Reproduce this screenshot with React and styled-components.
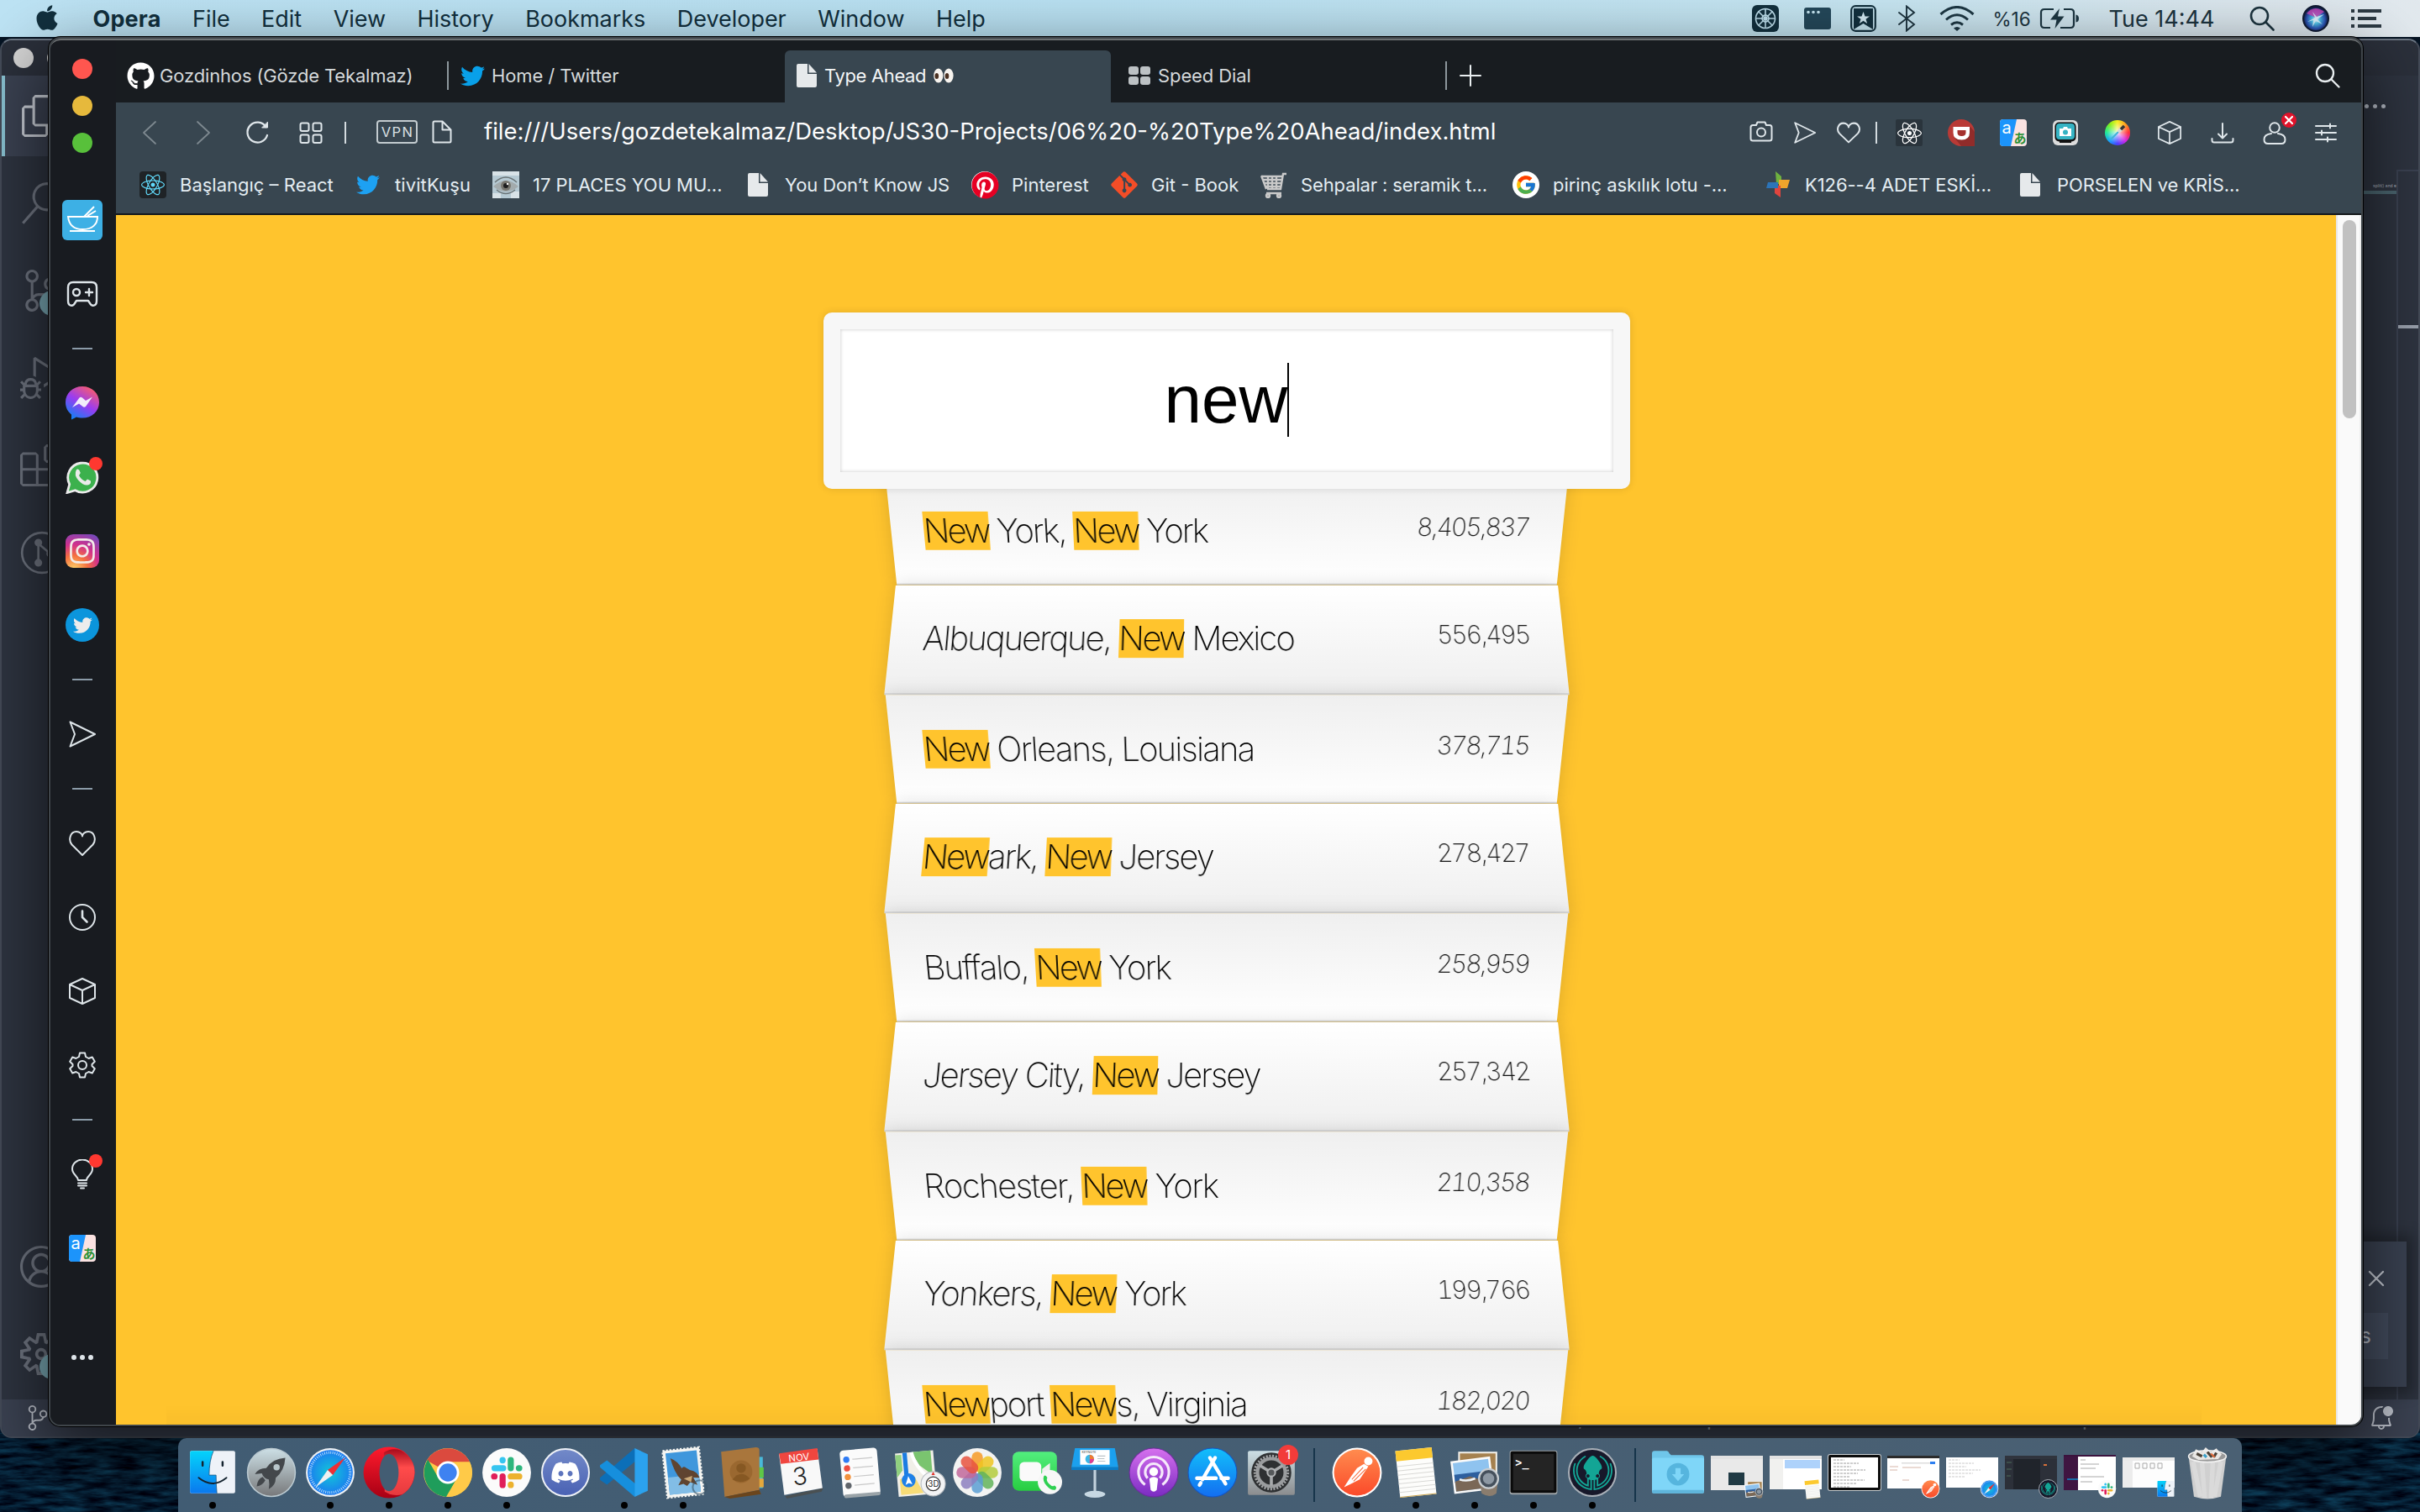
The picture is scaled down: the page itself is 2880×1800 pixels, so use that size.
import React from "react";
import styled, { createGlobalStyle, css } from "styled-components";
import { FaApple, FaGithub, FaTwitter, FaReact, FaPinterest, FaGitAlt, FaInstagram, FaDiscord } from "react-icons/fa";
import { FcGoogle } from "react-icons/fc";
import { SiGitkraken } from "react-icons/si";
import { VscFiles, VscSearch, VscSourceControl, VscDebugAlt, VscExtensions, VscAccount, VscSettingsGear, VscBellDot } from "react-icons/vsc";

const UI = `Inter, "Noto Sans", "Liberation Sans", sans-serif`;
const INK = "#12303e";
const YELLOW = "#ffc42d";

const GlobalStyle = createGlobalStyle`
  *, *::before, *::after { box-sizing: border-box; }
  body { margin: 0; background: #04101c; font-family: ${UI}; }
  svg { display: block; flex: none; }
`;

/* ---------- desktop ---------- */

const Desktop = styled.div`
  position: relative;
  width: 2880px;
  height: 1800px;
  overflow: hidden;
  background: #051322;
`;

const Wallpaper = styled.svg`
  position: absolute;
  left: 0;
  bottom: 0;
`;

const MenuBar = styled.header`
  position: relative;
  display: flex;
  align-items: center;
  justify-content: space-between;
  height: 44px;
  padding-left: 39px;
  padding-right: 46px;
  color: ${INK};
  font-size: 27px;
  background: linear-gradient(90deg, #bde3f4 0%, #b9e1f2 45%, #c6e5f1 78%, #dbe7ee 92%, #e2e9ee 100%);
`;

const MenuGroup = styled.nav`
  display: flex;
  align-items: center;
  gap: ${(p) => p.$gap || 0}px;
  height: 44px;
`;

const MenuItem = styled.span`
  font-weight: ${(p) => (p.$bold ? 700 : 400)};
  letter-spacing: ${(p) => (p.$bold ? "0.15px" : "-0.03px")};
  white-space: nowrap;
`;

const AppleSlot = styled.span`
  width: 34px;
  padding-bottom: 3px;
`;

const StatusSlot = styled.span`
  display: flex;
  align-items: center;
  justify-content: center;
  width: ${(p) => p.$w}px;
  white-space: nowrap;
  color: #1d343f;
  font-size: ${(p) => p.$size || 27}px;
`;

/* ---------- editor window behind the browser ---------- */

const Editor = styled.section`
  position: absolute;
  left: 0;
  top: 46px;
  width: 2880px;
  height: 1666px;
  display: flex;
  flex-direction: column;
  border-radius: 14px;
  overflow: hidden;
  border: 2px solid #444b58;
  border-top-color: #6d7784;
  background: #2e3440;
`;

const EditorTitle = styled.div`
  display: flex;
  align-items: center;
  gap: 16px;
  height: 42px;
  padding-left: 14px;
  background: #2b303b;
`;

const PaleLight = styled.span`
  width: 24px;
  height: 24px;
  border-radius: 50%;
  background: #d6d6d6;
`;

const EditorBody = styled.div`
  flex: 1;
  display: flex;
  justify-content: space-between;
`;

const ActivityBar = styled.div`
  display: flex;
  flex-direction: column;
  justify-content: space-between;
  width: 100px;
  padding-bottom: 2px;
`;

const ActivitySlot = styled.div`
  position: relative;
  display: flex;
  align-items: center;
  height: ${(p) => p.$h || 104}px;
  margin-bottom: ${(p) => (p.$active ? 4 : 0)}px;
  padding-left: 22px;
  font-size: 50px;
  color: ${(p) => (p.$active ? "#c9ced6" : "#707682")};
  ${(p) => p.$active && css`
    background: #3b4252;
    border-left: 4px solid #88c0d0;
    padding-left: 18px;
  `}
`;

const TealBadge = styled.i`
  position: absolute;
  left: 45px;
  top: 50%;
  width: 30px;
  height: 30px;
  border-radius: 50%;
  background: #7aa9b5;
`;

const EditorRight = styled.div`
  display: grid;
  grid-template-columns: 40px 26px;
  width: 66px;
`;

const MinimapLane = styled.div`
  display: flex;
  flex-direction: column;
  align-items: flex-end;
  color: #aab1bd;
  white-space: nowrap;
`;

const LaneDots = styled.div`
  display: flex;
  gap: 5px;
  height: 127px;
  padding: 34px 13px 0 0;

  i {
    width: 5px;
    height: 5px;
    border-radius: 50%;
    background: #b4bac4;
  }
`;

const LaneCode = styled.div`
  width: 40px;
  height: 14px;
  border-bottom: 4px solid #4b6670;
  text-align: right;
  font-size: 5px;
  line-height: 8px;
`;

const RulerLane = styled.div`
  margin-top: 112px;
  padding-top: 183px;
  border-left: 2px solid #3b4252;
  border-top: 2px solid #3b4252;

  &::before {
    content: "";
    display: block;
    height: 4px;
    background: #9aa1ad;
  }
`;

const StatusBar = styled.footer`
  display: flex;
  align-items: center;
  justify-content: space-between;
  height: 44px;
  padding-left: 28px;
  padding-right: 28px;
  background: #3b4252;
  color: #a4abb8;
  font-size: 24px;
`;

const StatusGroup = styled.div`
  display: flex;
  align-items: center;
  gap: ${(p) => p.$gap}px;
`;

const Toast = styled.div`
  position: absolute;
  left: 2600px;
  top: 1478px;
  width: 264px;
  height: 173px;
  display: flex;
  flex-direction: column;
  align-items: flex-end;
  gap: 30px;
  padding: 33px 25px 0 0;
  background: #3a4252;
  box-shadow: 0 0 16px 8px rgba(0, 0, 0, 0.3);
  color: #c8cdd6;
`;

const ToastButton = styled.div`
  height: 55px;
  margin-right: -3px;
  padding: 0 20px 0 60px;
  line-height: 55px;
  font-size: 25px;
  background: #434c5e;
  color: #b3b9c4;
`;

/* ---------- browser window ---------- */

const Browser = styled.main`
  position: absolute;
  left: 60px;
  top: 46px;
  width: 2750px;
  height: 1650px;
  display: grid;
  grid-template-columns: 78px 1fr;
  border-radius: 12px;
  background: #181c20;
  box-shadow: 0 0 0 2px #3f454a, 0 0 0 3px #000, 0 30px 80px 10px rgba(0, 0, 0, 0.58);
  overflow: hidden;
`;

const BrowserGlow = styled.div`
  position: absolute;
  left: 60px;
  top: 46px;
  width: 2750px;
  height: 40px;
  border-top: 2px solid #6c7072;
  border-radius: 12px;
  pointer-events: none;
`;

const Sidebar = styled.aside`
  display: flex;
  flex-direction: column;
  align-items: center;
  padding-top: 24px;
  padding-right: 2px;
  background: #181b20;
`;

const Lights = styled.div`
  display: flex;
  flex-direction: column;
  gap: 20px;
  margin-bottom: 36px;
`;

const Light = styled.span`
  width: 24px;
  height: 24px;
  border-radius: 50%;
  background: ${(p) => p.$c};
`;

const SideSlot = styled.div`
  position: relative;
  display: flex;
  align-items: center;
  justify-content: center;
  width: 76px;
  height: 88px;
  margin-top: ${(p) => p.$mt || 0}px;
  color: #dde4e8;
`;

const SideDash = styled.i`
  width: 24px;
  height: 2px;
  margin: 20px 0;
  background: #8b9ba8;
`;

const ActiveTile = styled.div`
  width: 48px;
  height: 48px;
  border-radius: 6px;
  background: #3db0e5;
`;

const RedDot = styled.i`
  position: absolute;
  right: 14px;
  top: 20px;
  width: 16px;
  height: 16px;
  border-radius: 50%;
  background: #ff3830;
`;

const Round = styled.div`
  display: flex;
  align-items: center;
  justify-content: center;
  width: ${(p) => p.$s}px;
  height: ${(p) => p.$s}px;
  border-radius: ${(p) => p.$r || "50%"};
  background: ${(p) => p.$bg};
  color: ${(p) => p.$fg || "#fff"};
  font-size: ${(p) => p.$fs || 24}px;
  flex: none;
`;

const BrowserMain = styled.div`
  display: flex;
  flex-direction: column;
  min-width: 0;
`;

const TabStrip = styled.div`
  display: flex;
  align-items: flex-end;
  height: 76px;
  padding-right: 25px;
`;

const Tab = styled.div`
  display: flex;
  align-items: center;
  gap: ${(p) => p.$gap || 10}px;
  width: ${(p) => p.$w}px;
  height: 62px;
  padding-left: ${(p) => p.$pl}px;
  padding-bottom: 2px;
  font-size: 22px;
  letter-spacing: ${(p) => p.$ls || -0.1}px;
  color: ${(p) => (p.$active ? "#f4f6f7" : "#d5d9db")};
  background: ${(p) => (p.$active ? "#384650" : "transparent")};
  border-radius: 6px 6px 0 0;
  white-space: nowrap;
`;

const TabDivider = styled.i`
  width: 2px;
  height: 34px;
  margin-bottom: 15px;
  background: #8d979d;
`;

const TabTool = styled.div`
  display: flex;
  align-items: center;
  height: 62px;
  padding-left: ${(p) => p.$pl || 0}px;
  margin-left: ${(p) => (p.$end ? "auto" : 0)};
  padding-bottom: 2px;
  color: #e9eef0;
`;

const Toolbar = styled.div`
  display: flex;
  align-items: center;
  height: 72px;
  padding-left: 8px;
  padding-right: 11px;
  background: #384650;
  color: #dfe6ea;
`;

const ToolSlot = styled.div`
  position: relative;
  display: flex;
  align-items: center;
  justify-content: center;
  width: ${(p) => p.$w}px;
  height: 72px;
  color: ${(p) => (p.$dim ? "#7d888f" : "#dfe6ea")};
`;

const ToolDivider = styled.i`
  width: 2px;
  height: 26px;
  margin-left: ${(p) => p.$ml || 0}px;
  margin-right: ${(p) => p.$mr || 0}px;
  background: #d4dbdf;
`;

const VpnBadge = styled.div`
  width: 49px;
  height: 28px;
  border: 2px solid #c3cbcf;
  border-radius: 4px;
  font-size: 16.5px;
  line-height: 24px;
  letter-spacing: 1.4px;
  text-align: center;
  padding-left: 1px;
  color: #dbe1e4;
  margin-bottom: 3px;
`;

const PageIconSlot = styled.div`
  display: flex;
  justify-content: center;
  width: 23px;
  margin: 0 39px 3px 17px;
`;

const Url = styled.div`
  flex: 1;
  font-size: 27.5px;
  color: #fdfdfd;
  white-space: nowrap;
  padding-bottom: 4px;
`;

const AlertBadge = styled.div`
  position: absolute;
  right: 4px;
  top: 12px;
  display: flex;
  align-items: center;
  justify-content: center;
  width: 18px;
  height: 18px;
  border-radius: 50%;
  background: #e0122a;
`;

const Bookmarks = styled.div`
  display: flex;
  align-items: center;
  height: 62px;
  padding: 0 0 8px 28px;
  background: #384650;
  border-bottom: 2px solid #14181b;
`;

const Bookmark = styled.div`
  display: flex;
  align-items: center;
  gap: 16px;
  width: ${(p) => p.$w}px;
  font-size: 22px;
  letter-spacing: ${(p) => p.$ls || 0}px;
  color: #e4edf2;
  white-space: nowrap;
`;

const BookmarkIcon = styled.span`
  display: flex;
  align-items: center;
  justify-content: center;
  width: 32px;
  height: 32px;
`;

const Viewport = styled.div`
  flex: 1;
  display: grid;
  grid-template-columns: 1fr 30px;
  min-height: 0;
`;

/* ---------- web page ---------- */

const Page = styled.div`
  position: relative;
  display: flex;
  flex-direction: column;
  align-items: center;
  padding-top: 116px;
  padding-left: 2px;
  background: ${YELLOW};
  font-family: "Liberation Sans", Arial, sans-serif;
  overflow: hidden;

  &::after {
    content: "";
    position: absolute;
    left: 60px;
    right: 160px;
    bottom: 0;
    height: 60px;
    background: linear-gradient(to bottom, transparent, rgba(0, 0, 0, 0.06));
  }
`;

const SearchBox = styled.div`
  position: relative;
  z-index: 2;
  display: flex;
  align-items: center;
  justify-content: center;
  width: 960px;
  height: 210px;
  padding: 0 2px 2px 0;
  flex: none;
  border: 20px solid #f7f7f7;
  border-radius: 10px;
  background: #fff;
  box-shadow: 0 0 10px rgba(0, 0, 0, 0.12), inset 0 0 4px rgba(0, 0, 0, 0.22);
  font-size: 80px;
  color: #000;

  &::after {
    content: "";
    width: 2px;
    height: 88px;
    margin-right: -2px;
    background: #000;
  }
`;

const Suggestions = styled.ul`
  list-style: none;
  width: 800px;
  margin: -20px 0 0;
  padding: 0;
`;

const Suggestion = styled.li`
  display: flex;
  justify-content: space-between;
  height: 130px;
  padding: 40px 40px 40px 39px;
  border-bottom: 2px solid #d8d8d8;
  box-shadow: 0 0 20px rgba(0, 0, 0, 0.14);
  line-height: 48px;
  color: #000;
  font-family: Inter, "Liberation Sans", sans-serif;
  font-weight: 200;

  &:nth-child(even) {
    transform: perspective(200px) rotateX(3deg) translateY(4px) scale(1.001);
    background: linear-gradient(to bottom, #ffffff 0%, #efefef 100%);
  }

  &:nth-child(odd) {
    transform: perspective(200px) rotateX(-3deg) translateY(6px);
    background: linear-gradient(to top, #ffffff 0%, #efefef 100%);
  }
`;

const City = styled.span`
  font-size: 40px;
  letter-spacing: ${(p) => p.$track || -1.95}px;
  white-space: nowrap;
`;

const Mark = styled.span`
  letter-spacing: -2.6px;
  background: linear-gradient(${YELLOW}, ${YELLOW}) center / 100% 46px no-repeat;
`;

const Population = styled.span`
  font-size: 30px;
  line-height: 38px;
  letter-spacing: -2px;
  font-variant-numeric: tabular-nums;
  color: #111;
`;

const ScrollTrack = styled.div`
  padding: 6px 0 0 6px;
  border-left: 2px solid #e8e8e8;
  background: #fafafa;
  border-right: 2px solid #ededed;
`;

const ScrollThumb = styled.div`
  width: 16px;
  height: 236px;
  border-radius: 8px;
  background: #c1c1c1;
`;

/* ---------- dock ---------- */

const Dock = styled.footer`
  position: absolute;
  left: 212px;
  bottom: 0;
  display: flex;
  width: 2456px;
  height: 88px;
  padding-left: 6px;
  border-radius: 10px 10px 0 0;
  background: linear-gradient(90deg, #415c73, #4a6073);
`;

const DockSlot = styled.div`
  position: relative;
  display: flex;
  flex-direction: column;
  align-items: center;
  justify-content: space-between;
  width: 70px;
  height: 88px;
  padding: 10px 0 4px;
  flex: none;
`;

const RunningDot = styled.i`
  width: 8px;
  height: 8px;
  border-radius: 50%;
  background: ${(p) => (p.$on ? "#000" : "transparent")};
`;

const DockDivider = styled.i`
  width: 2px;
  height: 64px;
  margin: 12px 15px 0;
  background: #16344a;
`;

const CountBadge = styled.b`
  position: absolute;
  right: 3px;
  top: 8px;
  width: 24px;
  height: 24px;
  border-radius: 50%;
  background: #f23c3a;
  color: #fff;
  font-size: 15px;
  font-weight: 400;
  line-height: 24px;
  text-align: center;
`;

const Shot = styled.div`
  display: flex;
  flex-direction: column;
  width: 62px;
  height: ${(p) => p.$h || 40}px;
  margin-top: ${(p) => p.$mt || 11}px;
  margin-bottom: auto;
  overflow: hidden;
  background: ${(p) => p.$bg || "#fff"};
  border: ${(p) => p.$frame || "none"};
  border-radius: ${(p) => (p.$frame ? 2 : 0)}px;
  box-shadow: ${(p) => (p.$frame ? "0 0 0 1px #c8cdd0" : "none")};
`;

const ShotBar = styled.i`
  height: 4px;
  background: ${(p) => p.$c || "#e2e2e2"};
`;

const ShotBadge = styled.div`
  position: absolute;
  right: 3px;
  top: 49px;
`;

/* ---------- icons ---------- */

const Line = ({ s = 32, w = 2, vb = 32, children }) => (
  <svg width={s} height={s} viewBox={`0 0 ${vb} ${vb}`} fill="none" stroke="currentColor" strokeWidth={w} strokeLinejoin="round" strokeLinecap="round">{children}</svg>
);

const HeartIcon = () => <Line><path d="M16 30 L3.500 17.500 C-1 12 1.500 2 9 2 C13 2 16 5 16 7.500 C16 5 19 2 23 2 C30.500 2 33 12 28.500 17.500 Z" /></Line>;
const SendIcon = () => <Line><path d="M1.500 1.500 L31 16 L1.500 30.500 L7 16 Z" /></Line>;
const CubeIcon = ({ s }) => <Line s={s}><path d="M16 1 L31 8 V24 L16 31 L1 24 V8 Z M1 8 L16 15 L31 8 M16 15 V31" /></Line>;
const ClockIcon = () => <Line><circle cx="16" cy="16" r="15" /><path d="M16 8.500 V16 L21.500 21.500" strokeWidth="2.600" /></Line>;
const GearIcon = () => (
  <Line><path d="M13 1.500 h6 l1 4.500 3.500 2 4.300-1.500 3 5.200-3.300 3.300 v2 l3.300 3.300-3 5.200-4.300-1.500-3.500 2-1 4.500 h-6 l-1-4.500-3.500-2-4.300 1.500-3-5.200 3.300-3.300 v-2 L1.200 11.700 l3-5.200 L8.500 8 l3.500-2 z" /><circle cx="16" cy="16" r="5" /></Line>
);
const BulbIcon = () => <Line s={36} vb={36}><path d="M13 25 C13 20 6 18.500 6 11.500 A12 11 0 0 1 30 11.500 C30 18.500 23 20 23 25 Z" /><path d="M13 28.500 H23 M13 31.500 H23 M16 34.500 H20" /></Line>;
const GamepadIcon = () => <Line s={38} vb={38} w={2.400}><path d="M8 5 H30 C34 5 36 7 36 11 V27 C36 34 30 34 28 30 L26 27 H12 L10 30 C8 34 2 34 2 27 V11 C2 7 4 5 8 5 Z" /><circle cx="12" cy="17" r="4" /><path d="M23 17 H31 M27 13 V21" /></Line>;
const DotsIcon = () => <svg width="28" height="6" viewBox="0 0 28 6" fill="#dde4e8"><circle cx="4" cy="3" r="3" /><circle cx="14" cy="3" r="3" /><circle cx="24" cy="3" r="3" /></svg>;
const BowlIcon = () => (
  <svg width="48" height="48" viewBox="0 0 48 48" fill="none" stroke="#fff" strokeWidth="2"><path d="M7 20 H42 C42 29 36 35 24.500 35 C13 35 8 29 7 20 Z M9 37 H39 M26 20 L38 8 M30 19 L40 13" /></svg>
);
const FileSolid = ({ h = 28 }) => <svg width={h * 0.857} height={h} viewBox="0 0 24 28" fill="#e6e9eb"><path d="M2 0 H13 V12 H24 V26 Q24 28 22 28 H2 Q0 28 0 26 V2 Q0 0 2 0 Z M14.500 0 L24 10.500 H14.500 Z" /></svg>;
const SearchIcon = ({ s = 30, w = 2.500 }) => <Line s={s} vb={30} w={w}><circle cx="12" cy="12" r="10" /><path d="M19.500 19.500 L28.500 28.500" /></Line>;
const SpeedDialIcon = () => <svg width="26" height="22" viewBox="0 0 26 22" fill="#bcc1c4"><rect width="12" height="10" rx="3" /><rect x="14" width="12" height="10" rx="3" /><rect y="12" width="12" height="10" rx="3" /><rect x="14" y="12" width="12" height="10" rx="3" /></svg>;
const EyesEmoji = () => (
  <svg width="24" height="18" viewBox="0 0 24 18"><ellipse cx="5.800" cy="9" rx="5.600" ry="8.600" fill="#f7f3ee" /><ellipse cx="18" cy="9" rx="5.600" ry="8.600" fill="#f7f3ee" /><ellipse cx="3.800" cy="9.500" rx="2.300" ry="3.600" fill="#4b3020" /><ellipse cx="16" cy="9.500" rx="2.300" ry="3.600" fill="#4b3020" /></svg>
);
const TranslateIcon = ({ s = 32 }) => (
  <svg width={s} height={s} viewBox="0 0 32 32" overflow="visible"><rect width="32" height="32" rx="4" fill="#fbe3e2" /><path d="M4 0 H20 L13 32 H4 Q0 32 0 28 V4 Q0 0 4 0 Z" fill="#1c94fb" /><text x="2.500" y="16.500" fontSize="20" fontFamily="Inter, sans-serif" fill="#fff">a</text><text x="16.500" y="27.500" fontSize="15" fontWeight="700" fontFamily='"Noto Sans CJK JP", sans-serif' fill="#2b9136">あ</text></svg>
);
const PinwheelIcon = () => (
  <svg width="32" height="32" viewBox="0 0 32 32"><path d="M13 0 L20 6 V15 H14 Z" fill="#6fb23f" /><path d="M17 10 H30 L27 20 H17 Z" fill="#f0a52c" /><path d="M12 17 H19 V31 L12 26 Z" fill="#e0453e" /><path d="M4 13 H16 V20 H2 Z" fill="#2c74b8" /></svg>
);
const CartIcon = () => (
  <svg width="32" height="32" viewBox="0 0 32 32" fill="none" stroke="#c9c9c9" strokeWidth="2.400"><path d="M31 3 H27 L24 21 H8 M1 6 H26 M2 10 H26 M4 14 H25 M6 18 H24 M1 5 L7 21 M9 5 V20 M14 5 V20 M19 5 V20 M7 26 H25" /><circle cx="9" cy="29" r="2" fill="#999" /><circle cx="22" cy="29" r="2" fill="#999" /></svg>
);
const EyePicture = () => (
  <svg width="32" height="32" viewBox="0 0 32 32"><rect width="32" height="32" fill="#b5c9d3" /><path d="M0 0 H32 V5 H0 Z M0 26 H10 V32 H0 Z M22 24 H32 V32 H22 Z" fill="#d8e2e7" /><path d="M1 18 Q16 4 31 18 Q16 30 1 18 Z" fill="#a3abad" /><circle cx="16" cy="17" r="6" fill="#77766f" /><circle cx="16" cy="17" r="3" fill="#1d1d1d" /><circle cx="18" cy="15" r="1.200" fill="#fff" /><path d="M3 13 Q16 1 29 13 M5 22 Q16 31 27 22" stroke="#6a7477" strokeWidth="1.500" fill="none" /></svg>
);

const Bluetooth = () => <Line s={32} w={1.900}><path d="M7 9 L25 23 L16 30.500 V1.500 L25 9 L7 23" strokeLinejoin="miter" /></Line>;
const Wifi = () => <svg width="42" height="30" viewBox="0 0 42 30" fill="none" stroke="#1d3743" strokeWidth="3"><path d="M1.500 10 Q21 -7 40.500 10 M8 16.500 Q21 5 34 16.500 M14 22.500 Q21 17 28 22.500" /><path d="M17 26.500 Q21 23.500 25 26.500 L21 30 Z" fill="#1d3743" stroke="none" /></svg>;
const Battery = () => <svg width="48" height="26" viewBox="0 0 48 26" fill="none" stroke="#1d3743" strokeWidth="2.200"><path d="M17 2 H6 Q2 2 2 6 V20 Q2 24 6 24 H13 M29 2 H37 Q41 2 41 6 V20 Q41 24 37 24 H25" /><path d="M24 1 L13 14.500 H20.500 L18.500 25 L29.500 10.500 H22 Z" fill="#1d3743" stroke="none" /><path d="M43.500 8.500 Q47 9 47 13 Q47 17 43.500 17.500 Z" fill="#1d3743" stroke="none" /></svg>;
const WheelApp = () => (
  <svg width="32" height="32" viewBox="0 0 32 32"><rect width="32" height="32" rx="6" fill={INK} /><g fill="none" stroke="#bfe0ee" strokeWidth="1.600"><circle cx="16" cy="16" r="11.500" /><circle cx="16" cy="16" r="4" /><path d="M16 4 V28 M4 16 H28 M7.500 7.500 L24.500 24.500 M24.500 7.500 L7.500 24.500" /></g><circle cx="16" cy="16" r="2" fill="#bfe0ee" /></svg>
);
const WindowApp = () => <svg width="32" height="26" viewBox="0 0 32 26"><rect width="32" height="26" rx="3" fill="#24485a" /><g fill="#c6e5f1"><circle cx="5" cy="5.500" r="1.800" /><circle cx="11" cy="5.500" r="1.800" /><circle cx="17" cy="5.500" r="1.800" /></g></svg>;
const StarApp = () => <svg width="31" height="32" viewBox="0 0 31 32"><rect x="1.200" y="1.200" width="28.600" height="29.600" rx="5" fill="#c6e5f1" stroke={INK} strokeWidth="2.200" /><path d="M4 4 H27 V29 L15.500 22 L4 29 Z" fill={INK} /><path d="M15.500 8 L17.500 13.500 H23 L18.500 16.800 L20.200 22 L15.500 18.800 L10.800 22 L12.500 16.800 L8 13.500 H13.500 Z" fill="#d3eaf4" /></svg>;
const Siri = () => (
  <svg width="32" height="32" viewBox="0 0 32 32"><defs><radialGradient id="siri" cx=".5" cy=".55" r=".55"><stop offset="0" stopColor="#e8f6ff" /><stop offset=".3" stopColor="#4ec4e8" /><stop offset=".7" stopColor="#2c55b5" /><stop offset="1" stopColor="#0c1433" /></radialGradient></defs><circle cx="16" cy="16" r="16" fill="#101a33" /><circle cx="16" cy="16" r="14" fill="url(#siri)" /><path d="M5 10 Q14 -1 26 8 L16 15 Z" fill="#d046b4" opacity=".8" /><path d="M6 20 L15 15 L12 8 L17 14 L26 11 L18 17 L24 23 L16 19 L12 26 L13 18 Z" fill="#dff6ff" opacity=".85" /></svg>
);
const ListIcon = () => <svg width="36" height="22" viewBox="0 0 36 22" fill="#2c3a43"><path d="M0 0 H4 V4 H0 Z M8 0 H36 V4 H8 Z M0 9 H4 V13 H0 Z M8 9 H30 V13 H8 Z M0 18 H4 V22 H0 Z M8 18 H36 V22 H8 Z" /></svg>;

const AdblockIcon = () => <svg width="32" height="32" viewBox="0 0 32 32"><path d="M16 0 A16 16 0 1 0 16 32 H32 V16 A16 16 0 0 0 16 0 Z" fill="#b93a36" /><path d="M27 9 L32 15 V32 H16 L8 22 Z" fill="#912c2a" /><path d="M6.500 9 H26 V16 Q26 24.500 16.500 24.500 Q6.500 24.500 6.500 16 Z" fill="#fff" /><path d="M11.500 13 H21.500 V16 Q21.500 20 16.500 20 Q11.500 20 11.500 16 Z" fill="#a5312e" /></svg>;
const ScreenshotIcon = () => <svg width="30" height="30" viewBox="0 0 30 30"><rect width="30" height="30" rx="6" fill="#dcdcdc" /><rect x="2.500" y="2.500" width="25" height="23" rx="5" fill="#111" /><rect x="4" y="4" width="22" height="19" rx="4" fill="#36b3c3" /><path d="M8 10 H12 L13 8 H17 L18 10 H22 V19 H8 Z" fill="#fff" /><circle cx="15" cy="14.500" r="3" fill="#36b3c3" /><rect x="8" y="24" width="14" height="3" fill="#111" /></svg>;

const WheelDisc = styled.div`
  display: flex;
  align-items: center;
  justify-content: center;
  width: 30px;
  height: 30px;
  border-radius: 50%;
  background:
    radial-gradient(circle, rgba(255, 255, 255, 0.85) 0%, rgba(255, 255, 255, 0) 62%),
    conic-gradient(from 90deg, #ff2b3a, #d428e8, #4a3cff, #18a4ff, #1de89a, #7df01c, #f5ef1e, #ff9a1e, #ff2b3a);
`;
const ColorPicker = () => <WheelDisc><svg width="22" height="22" viewBox="0 0 22 22"><path d="M3 19 L12 10" stroke="#43b4d6" strokeWidth="2.200" /><path d="M12 10 L16 6" stroke="#d9d9d9" strokeWidth="4" /><path d="M15 7 L19 3" stroke="#333" strokeWidth="3.500" /></svg></WheelDisc>;

/* dock artwork, drawn on a 60 unit square */
const Art = ({ s = 62, children }) => <svg width={s} height={s} viewBox="0 0 60 60" overflow="visible">{children}</svg>;

const Finder = ({ s }) => <Art s={s}><defs><linearGradient id="fin" x2="0" y2="1"><stop offset="0" stopColor="#04d4fb" /><stop offset="1" stopColor="#0a78ee" /></linearGradient></defs><rect x="4" y="5" width="52" height="49" rx="2" fill="#eef2f8" /><path d="M6 5 H31 Q26 17 26 33 H34 Q34 44 35 54 H6 Q4 54 4 52 V7 Q4 5 6 5 Z" fill="url(#fin)" /><path d="M31 5 Q26 17 26 33 H34 Q34 44 35 54" fill="none" stroke="#1f5a86" strokeWidth=".8" /><path d="M18.500 18 V22 M41.500 18 V22" stroke="#14232f" strokeWidth="2.400" strokeLinecap="round" /><path d="M14 36 Q30 49 46 36" fill="none" stroke="#14232f" strokeWidth="1.800" strokeLinecap="round" /></Art>;
const Launchpad = () => <Art><defs><linearGradient id="lp" x2="0" y2="1"><stop offset="0" stopColor="#ccdfe5" /><stop offset="1" stopColor="#77787a" /></linearGradient></defs><circle cx="30" cy="30" r="27.500" fill="url(#lp)" stroke="#bccbd2" strokeWidth="1.500" /><path d="M46 13 Q31 14 24 25 Q15 25 11 32 L19 31 Q21 37 27 38 Q28 43 27 49 Q35 45 35 36 Q45 28 46 13 Z M20 35 Q14 37 13 46 Q20 45 23 39 Z" fill="#43474b" /><circle cx="36" cy="24" r="3.600" fill="#b9c6cb" /></Art>;
const Safari = ({ s }) => <Art s={s}><defs><radialGradient id="saf"><stop offset="0" stopColor="#12c8d8" /><stop offset="1" stopColor="#1b7af0" /></radialGradient></defs><circle cx="30" cy="30" r="28" fill="#eef1f3" /><circle cx="30" cy="30" r="26" fill="url(#saf)" /><circle cx="30" cy="30" r="23" fill="none" stroke="#cfeaff" strokeWidth="3" strokeDasharray=".8 1.600" /><path d="M47.500 12.500 L27 27 L33 33 Z" fill="#ee2f35" /><path d="M13 47 L27 27 L33 33 Z" fill="#f0f0f0" /></Art>;
const Opera = () => <Art><defs><linearGradient id="op" x2="0" y2="1"><stop offset="0" stopColor="#ff1b2d" /><stop offset="1" stopColor="#a70014" /></linearGradient><linearGradient id="op2" x2="0" y2="1"><stop offset="0" stopColor="#a80b1c" /><stop offset=".4" stopColor="#ff4b4b" /><stop offset="1" stopColor="#e63a3e" /></linearGradient></defs><circle cx="30" cy="30" r="29.500" fill="url(#op)" /><path d="M24 7 Q33 1 44 4.500 Q59.500 14 59.500 30 Q58.500 47 45 55.500 Q34 58 25 52 Z" fill="url(#op2)" /><ellipse cx="30" cy="30" rx="11" ry="21.500" fill="#435d73" /></Art>;
const Chrome = () => <Art><circle cx="30" cy="30" r="28" fill="#ffca48" /><path d="M30 30 L5.800 16 A28 28 0 0 1 54.200 16 L55 18 H30 Z" fill="#db4a3e" /><path d="M30 30 L19 36 L7 15 A28 28 0 0 0 28 58 L41 36 Z" fill="#1f9d5b" /><path d="M30 18 H55.300 A28 28 0 0 1 29 58 L40.500 36 Z" fill="#ffca48" /><circle cx="30" cy="30" r="13" fill="#fff" /><circle cx="30" cy="30" r="10.300" fill="#3e82f1" /></Art>;
const Slack = ({ s }) => <Art s={s}><circle cx="30" cy="30" r="28" fill="#fbfbfb" /><g strokeWidth="7" strokeLinecap="round"><path d="M16 25 H26" stroke="#36c5f0" /><path d="M25.300 15.500 V16" stroke="#36c5f0" /><path d="M34.700 15.500 V25" stroke="#2eb67d" /><path d="M44 25 H44.500" stroke="#2eb67d" /><path d="M34.700 34.500 H44.500" stroke="#ecb22e" /><path d="M34.700 44 V44.500" stroke="#ecb22e" /><path d="M25.300 34.500 V44.500" stroke="#e01e5a" /><path d="M15.500 34.500 H16" stroke="#e01e5a" /></g></Art>;
const Code = () => <Art><path d="M42 2 L44 16 L10 44 L2 38.500 V36 Z" fill="#0c6fb8" /><path d="M42 58 L44 44 L10 16 L2 21.500 V24 Z" fill="#168fdd" /><path d="M42 2 V58 L57 51 V9 Z" fill="#2ba2ee" /></Art>;
const Mail = () => <Art><g transform="rotate(-6 30 30)"><rect x="9" y="3" width="42" height="54" fill="#f5f5f2" stroke="#f5f5f2" strokeWidth="2.500" strokeDasharray="2.200 1.800" /><rect x="12" y="6" width="36" height="48" fill="#3f97dc" /><rect x="12" y="34" width="36" height="20" fill="#82bde6" /><path d="M17 12 Q25 16 29 25 Q31 22 34 25 L38 28 Q47 31 48 38 L41 37 L45 46 L37 42 L33 46 L29 43 L23 44 L27 38 Q20 30 17 12 Z" fill="#5f4430" /><path d="M30 37 L40 35 L38 42 Z" fill="#c9a877" /></g><circle cx="49" cy="47" r="8" fill="none" stroke="#3b5568" strokeWidth="2" opacity=".6" /></Art>;
const Contacts = () => <Art><g><rect x="47" y="12" width="7" height="36" fill="#49b9d9" /><rect x="47" y="24" width="8" height="12" fill="#5ec846" /><rect x="47" y="37" width="8" height="10" fill="#e5a93c" /></g><path d="M6 6 L46 1 Q50 1 50 4 V50 L10 58 Z" fill="#a9763c" /><path d="M10 58 L50 50 L52 55 L16 60 Z" fill="#6b451c" /><circle cx="29" cy="29" r="13" fill="#9a6830" /><circle cx="29" cy="25" r="5.500" fill="#865823" /><path d="M19 38 Q29 26 39 37 Q29 44 19 38 Z" fill="#865823" /></Art>;
const Calendar = () => <Art><path d="M12 57 L56 48 L54 52 L14 60 Z" fill="#4a5052" /><path d="M5 9 L49 3 L55 48 L11 56 Z" fill="#f8f8f8" /><path d="M5 8 L49 2 L50.500 15 L7 20 Z" fill="#f0463f" /><text x="16" y="16.500" fontSize="11" fill="#fff" fontFamily="Inter, sans-serif" transform="rotate(-6 28 14)">NOV</text><text x="21" y="44" fontSize="28" fontWeight="300" fill="#222" fontFamily="Inter, sans-serif" transform="rotate(-6 30 40)">3</text></Art>;
const Reminders = () => <Art><g transform="rotate(-5 30 30)"><rect x="9" y="3" width="43" height="54" rx="4" fill="#fbfbfb" /><rect x="10" y="54" width="42" height="4" rx="2" fill="#9aa3a8" /><circle cx="16" cy="14" r="3.600" fill="#2f7cf5" /><circle cx="16" cy="24" r="3.600" fill="#ef4d3f" /><circle cx="16" cy="34" r="3.600" fill="#f2913c" /><circle cx="16" cy="44" r="3.600" fill="#60656b" /><path d="M23 14 H46 M23 24 H46 M23 34 H46 M23 44 H46" stroke="#c9c9c9" strokeWidth="1.200" /></g></Art>;
const Maps = () => <Art><g transform="rotate(-5 30 30)"><rect x="5" y="6" width="44" height="50" fill="#f1efe8" /><path d="M24 6 L32 22 L46 34 V6 Z" fill="#7ac46f" /><path d="M5 8 H12 V26 L5 34 Z" fill="#8fd07f" /><path d="M8 36 L24 32 L34 54 H8 Z" fill="#f7dc77" /><path d="M36 40 L46 46 V54 H38 Z" fill="#f3a9ac" /><path d="M24 6 Q26 24 48 44" stroke="#fff" strokeWidth="4" fill="none" /><path d="M16 6 V38" stroke="#1c7de2" strokeWidth="5" /><circle cx="18" cy="38" r="8" fill="#1e80e8" /><path d="M18 33 L22 43 L18 41 L14 43 Z" fill="#fff" /></g><circle cx="47" cy="43" r="14" fill="#f2f3f4" stroke="#b7bcc0" /><circle cx="47" cy="43" r="8" fill="#fff" stroke="#333" strokeWidth="1.200" /><text x="41" y="46.500" fontSize="9.500" fill="#222" fontFamily="Inter, sans-serif">3D</text><path d="M47 29 L49 33 H45 Z" fill="#e3352c" /></Art>;
const PETALS = ["#f69a26", "#efc421", "#b3cb3c", "#62b35b", "#5a9ed4", "#8c7fc0", "#c1679b", "#e8523f"];
const Photos = () => <Art><circle cx="30" cy="30" r="28" fill="#f3f3f2" />{PETALS.map((c, i) => <rect key={c} x="23.500" y="6" width="13" height="23" rx="6.500" fill={c} opacity=".85" transform={`rotate(${i * 45} 30 30)`} />)}</Art>;
const FaceTime = () => <Art><defs><linearGradient id="ft" x2="0" y2="1"><stop offset="0" stopColor="#52ee7e" /><stop offset="1" stopColor="#28cd41" /></linearGradient></defs><rect x="3" y="6" width="51" height="45" rx="7" fill="url(#ft)" /><rect x="11" y="18" width="25" height="22" rx="5" fill="#fafafa" /><path d="M37 26 L46 19 V39 L37 33 Z" fill="#f0f0f0" /><circle cx="46" cy="41" r="14" fill="#f7f7f7" /><path d="M39 34 Q41 32 43 36 Q41 39 45 43 Q49 47 51 45 Q55 47 52 50 Q47 51 42 45 Q37 39 39 34 Z" fill="#2fd052" /></Art>;
const Keynote = () => <Art><path d="M28.500 24 H31.500 V54 H28.500 Z" fill="#c3d2dc" /><ellipse cx="30" cy="55" rx="12" ry="4" fill="#c7d8e3" /><path d="M7 2 H53 L57 24 H3 Z" fill="#1ba0ee" /><path d="M3 24 H57 V27 H3 Z" fill="#0b7cc7" /><rect x="13" y="4" width="34" height="17" fill="#fff" /><circle cx="24" cy="14.500" r="5" fill="#3bb7e6" /><path d="M24 14.500 V9.500 A5 5 0 0 1 29 14.500 Z" fill="#ef7c31" /><path d="M24 14.500 H29 A5 5 0 0 1 24 19.500 Z" fill="#df3d90" /><path d="M33 11 H42 M33 14 H41 M33 17 H42" stroke="#bcc4c8" /><text x="15" y="8" fontSize="3.500" fontFamily="Inter, sans-serif" fill="#333">KEYNOTE</text></Art>;
const Podcasts = () => <Art><defs><linearGradient id="pod" x2="0" y2="1"><stop offset="0" stopColor="#d670ee" /><stop offset="1" stopColor="#7a2bc2" /></linearGradient></defs><circle cx="30" cy="30" r="28" fill="url(#pod)" stroke="#6d2b9e" /><g fill="none" stroke="#f6e9fb" strokeWidth="3"><path d="M20 44 A17.500 17.500 0 1 1 40 44" /><path d="M23 36.500 A9.800 9.800 0 1 1 37 36.500" /></g><circle cx="30" cy="29" r="5" fill="#fff" /><path d="M25 37 Q30 33 35 37 L33.500 50 Q30 54 26.500 50 Z" fill="#fff" /></Art>;
const AppStore = () => <Art><defs><linearGradient id="as" x2="0" y2="1"><stop offset="0" stopColor="#12bffb" /><stop offset="1" stopColor="#136ef0" /></linearGradient></defs><circle cx="30" cy="30" r="28" fill="url(#as)" stroke="#1456c4" /><g stroke="#fff" strokeWidth="4.200" strokeLinecap="round"><path d="M33 13 L18.500 38 M27 13 L45 43 M12 36.500 H34 M40 36.500 H48 M16.500 42 L15 44.500" /></g></Art>;
const Prefs = () => <Art><defs><linearGradient id="pr" x2="0" y2="1"><stop offset="0" stopColor="#ccdfe5" /><stop offset="1" stopColor="#8b8c8e" /></linearGradient></defs><rect x="3" y="5" width="54" height="51" rx="2" fill="url(#pr)" /><circle cx="30" cy="30" r="23" fill="#2e3032" /><circle cx="30" cy="30" r="19" fill="none" stroke="#a3a5a7" strokeWidth="3" strokeDasharray="2 1.600" /><circle cx="30" cy="30" r="16" fill="none" stroke="#9a9c9e" strokeWidth="4" /><path d="M30 30 V45 M30 30 L17 22 M30 30 L43 22" stroke="#a8aaac" strokeWidth="3.500" /><circle cx="30" cy="30" r="4.500" fill="#55585a" stroke="#b2b4b6" strokeWidth="2" /></Art>;
const Postman = ({ s }) => <Art s={s}><defs><linearGradient id="pm" x2="0" y2="1"><stop offset="0" stopColor="#ff8b4e" /><stop offset="1" stopColor="#fb4a2a" /></linearGradient></defs><circle cx="30" cy="30" r="28.500" fill="#fff" /><circle cx="30" cy="30" r="26.500" fill="url(#pm)" /><circle cx="43" cy="17" r="4.800" fill="#fff" /><path d="M38 20 L43 23 L33 38 L23 43 L15 47 L22 36 L30 25 Z" fill="#fff" /><path d="M37 24 L24 38 M40 26 L26 40" stroke="#f7693a" strokeWidth="1" /></Art>;
const Notes = ({ s }) => <Art s={s}><g transform="rotate(-6 30 30)"><rect x="9" y="3" width="42" height="54" fill="#fdfdfb" /><rect x="9" y="3" width="42" height="12" fill="#fcc92f" /><path d="M9 21 H51 M9 26 H51 M9 31 H51 M9 36 H51 M9 41 H51 M9 46 H51 M9 51 H51" stroke="#d9d9d6" /><path d="M9 56.500 H51" stroke="#c9a24a" /></g></Art>;
const Preview = ({ s }) => <Art s={s}><rect x="11" y="6" width="45" height="40" fill="#f1efe9" /><rect x="13" y="8" width="41" height="34" fill="#a5814f" /><g transform="rotate(-7 28 32)"><rect x="4" y="14" width="46" height="38" fill="#fafafa" /><rect x="6.500" y="16.500" width="41" height="33" fill="#8fc3ef" /><rect x="6.500" y="30" width="41" height="9" fill="#2d5f9e" /><path d="M6.500 38 L24 34 L47.500 44 V49.500 H6.500 Z" fill="#7a6857" /><path d="M12 36 Q20 40 30 37" stroke="#eef3f6" strokeWidth="2.500" fill="none" /></g><path d="M35 36 L57 38 L55 54 Q47 60 38 54 Z" fill="#8b7d6e" /><circle cx="46" cy="37" r="11" fill="#45505c" stroke="#c9ced2" strokeWidth="2.200" /><circle cx="46" cy="37" r="6.500" fill="#8d98a3" /></Art>;
const Terminal = () => <Art><rect x="2.500" y="4.500" width="55" height="51" rx="3" fill="#9ba1a4" /><rect x="3.500" y="5.500" width="53" height="48" rx="2" fill="#0a0a0a" /><rect x="6.500" y="8.500" width="47" height="42" fill="#242424" /><text x="9" y="23" fontSize="13" fontWeight="700" fill="#fff" fontFamily='"DejaVu Sans Mono", monospace'>&gt;_</text></Art>;

const RingDisc = styled.div`
  display: flex;
  align-items: center;
  justify-content: center;
  width: ${(p) => p.$s}px;
  height: ${(p) => p.$s}px;
  margin: ${(p) => (p.$s > 40 ? 2 : 0)}px 0;
  border-radius: 50%;
  border: ${(p) => (p.$s > 40 ? 2.5 : 1.5)}px solid ${(p) => p.$ring};
  background: ${(p) => p.$bg};
  color: ${(p) => p.$fg};
  font-size: ${(p) => p.$fs}px;
`;
const Disc = ({ s = 58, bg, ring, fg, fs, children }) => <RingDisc $s={s} $bg={bg} $ring={ring} $fg={fg} $fs={fs}>{children}</RingDisc>;
const Kraken = ({ s, fs = 47 }) => <Disc s={s} bg="#17182a" ring="#a9b0b8" fg="#13a595" fs={fs}><SiGitkraken /></Disc>;

const Folder = () => <Art><path d="M0 8 Q0 5 3 5 H17 Q19 5 20 8 L22 10 H57 Q60 10 60 13 V18 H0 Z" fill="#6fc6ea" /><rect x="0" y="13" width="60" height="41" rx="2" fill="#7fd6f8" /><rect x="0" y="50" width="60" height="4" rx="2" fill="#5fb5db" /><circle cx="30" cy="32" r="13" fill="#56b5de" /><path d="M27 25 H33 V32 H37 L30 40 L23 32 H27 Z" fill="#7fd6f8" /></Art>;
const Trash = () => <Art s={64}><path d="M9 11 L51 11 L45 56 Q30 61 15 56 Z" fill="#d0d0d0" /><path d="M14 17 L22 56 M24 18 L27 58 M36 18 L34 58 M45 17 L38 56" stroke="#e2e2e2" strokeWidth="5" opacity=".6" /><ellipse cx="30" cy="11" rx="21" ry="6.500" fill="#9a9a9a" /><path d="M13 11 L17 3 L24 6 L28 1 L34 6 L40 2 L46 9 L42 14 L20 15 Z" fill="#e9e7e4" /><path d="M18 8 L24 11 M30 6 L35 12 M40 7 L37 12" stroke="#4a4238" strokeWidth="3" /><path d="M26 9 L29 12" stroke="#3aa0c8" strokeWidth="3" /><path d="M34 8 L38 12" stroke="#e06a3a" strokeWidth="2" /><ellipse cx="30" cy="11" rx="21" ry="6.500" fill="none" stroke="#f0f0f0" strokeWidth="1.500" /></Art>;

const CodeLines = ({ n = 7, c = "#9a9a9a" }) => (
  <svg width="60" height="36" viewBox="0 0 60 36" stroke={c} strokeWidth="1" opacity=".7">
    {Array.from({ length: n }, (_, i) => <path key={i} strokeDasharray="3 1" d={`M3 ${3 + i * 4} H${16 + ((i * 17) % 26)}`} />)}
  </svg>
);

/* ---------- data ---------- */

const CITIES = [
  { name: "New York, New York", population: "8,405,837" },
  { name: "Albuquerque, New Mexico", population: "556,495" },
  { name: "New Orleans, Louisiana", population: "378,715", track: -1.76 },
  { name: "Newark, New Jersey", population: "278,427" },
  { name: "Buffalo, New York", population: "258,959", track: -1.8 },
  { name: "Jersey City, New Jersey", population: "257,342" },
  { name: "Rochester, New York", population: "210,358", track: -1.4 },
  { name: "Yonkers, New York", population: "199,766", track: -1.85 },
  { name: "Newport News, Virginia", population: "182,020" },
];

const highlight = (text) =>
  text.split(/(New)/).map((part, i) => (part === "New" ? <Mark key={i}>{part}</Mark> : part));

const BOOKMARKS = [
  { label: "Başlangıç – React", w: 256, icon: <Round $s={32} $r="4px" $bg="#1f2326" $fg="#61dafb" $fs={28}><FaReact /></Round> },
  { label: "tivitKuşu", w: 164, ls: 0.1, icon: <Round $s={32} $bg="none" $fg="#1da1f2" $fs={28}><FaTwitter /></Round> },
  { label: "17 PLACES YOU MU...", w: 300, ls: -0.04, icon: <EyePicture /> },
  { label: "You Don’t Know JS", w: 270, ls: -0.12, icon: <FileSolid /> },
  { label: "Pinterest", w: 166, icon: <Round $s={32} $bg="#fff" $fg="#e60023" $fs={33}><FaPinterest /></Round> },
  { label: "Git - Book", w: 178, icon: <Round $s={32} $bg="none" $fg="#f44d27" $fs={36}><FaGitAlt /></Round> },
  { label: "Sehpalar : seramik t...", w: 300, ls: -0.12, icon: <CartIcon /> },
  { label: "pirinç askılık lotu -...", w: 300, ls: -0.05, icon: <Round $s={32} $bg="#fff" $fs={26}><FcGoogle /></Round> },
  { label: "K126--4 ADET ESKİ...", w: 300, ls: -0.06, icon: <PinwheelIcon /> },
  { label: "PORSELEN ve KRİS...", w: 300, ls: -0.12, icon: <FileSolid /> },
];

const DOCK_APPS = [
  [<Finder />, true], [<Launchpad />, false], [<Safari />, true], [<Opera />, true], [<Chrome />, true], [<Slack />, true],
  [<Disc bg="linear-gradient(#7289c8,#4a62b4)" ring="#eef1f6" fg="#fff" fs={36}><FaDiscord /></Disc>, false],
  [<Code />, true], [<Mail />, true], [<Contacts />, false], [<Calendar />, false], [<Reminders />, false], [<Maps />, false],
  [<Photos />, false], [<FaceTime />, false], [<Keynote />, false], [<Podcasts />, false], [<AppStore />, false], [<Prefs />, false, 1],
];
const DOCK_RECENT = [<Postman />, <Notes />, <Preview />, <Terminal />, <Kraken />];

export default function App() {
  return (
    <>
      <GlobalStyle />
      <Desktop>
        <Wallpaper width="2880" height="100">
          <filter id="sea" x="0" y="0" width="100%" height="100%" colorInterpolationFilters="sRGB">
            <feTurbulence type="fractalNoise" baseFrequency="0.03 0.16" numOctaves="4" seed="8" />
            <feColorMatrix values="0.1 0 0 0 -0.03  0.4 0 0 0 -0.09  0.48 0 0 0 -0.05  0 0 0 0 1" />
          </filter>
          <rect width="2880" height="100" filter="url(#sea)" />
        </Wallpaper>

        <Editor>
          <EditorTitle><PaleLight /><PaleLight /><PaleLight /></EditorTitle>
          <EditorBody>
            <ActivityBar>
              <div>
                <ActivitySlot $active $h={96}><VscFiles /></ActivitySlot>
                <ActivitySlot><VscSearch /></ActivitySlot>
                <ActivitySlot><VscSourceControl /><TealBadge /></ActivitySlot>
                <ActivitySlot><VscDebugAlt /></ActivitySlot>
                <ActivitySlot><VscExtensions /></ActivitySlot>
                <ActivitySlot>
                  <Line s={52} vb={48} w={2.400}><circle cx="24" cy="24" r="22" /><circle cx="20" cy="13" r="3" fill="currentColor" /><circle cx="20" cy="35" r="3" fill="currentColor" /><circle cx="33" cy="25" r="3" fill="currentColor" /><path d="M20 14 V34 M20 14 L33 25" /></Line>
                </ActivitySlot>
              </div>
              <div>
                <ActivitySlot><VscAccount /></ActivitySlot>
                <ActivitySlot><VscSettingsGear /><TealBadge /></ActivitySlot>
              </div>
            </ActivityBar>
            <EditorRight>
              <MinimapLane><LaneDots><i /><i /><i /></LaneDots><LaneCode>split() and e</LaneCode></MinimapLane>
              <RulerLane />
            </EditorRight>
          </EditorBody>
          <StatusBar>
            <StatusGroup $gap={8}><VscSourceControl size={30} color="#c0c5cf" /><span>master</span></StatusGroup>
            <StatusGroup $gap={50}>
              <span>Ln 17, Col 20</span><span>Spaces: 4</span><span>UTF-8</span><span>LF</span><span>JavaScript</span><span>Go Live</span><span>Prettier</span><VscBellDot size={32} color="#c0c5cf" />
            </StatusGroup>
          </StatusBar>
        </Editor>
        <Toast>
          <Line s={22} vb={22} w={2.200}><path d="M3 3 L19 19 M19 3 L3 19" /></Line>
          <ToastButton>s</ToastButton>
        </Toast>

        <MenuBar>
          <MenuGroup $gap={37.5}>
            <AppleSlot><FaApple size={34} /></AppleSlot>
            <MenuItem $bold>Opera</MenuItem>
            {["File", "Edit", "View", "History", "Bookmarks", "Developer", "Window", "Help"].map((m) => <MenuItem key={m}>{m}</MenuItem>)}
          </MenuGroup>
          <MenuGroup>
            <StatusSlot $w={64}><WheelApp /></StatusSlot>
            <StatusSlot $w={60}><WindowApp /></StatusSlot>
            <StatusSlot $w={49}><StarApp /></StatusSlot>
            <StatusSlot $w={54}><Bluetooth /></StatusSlot>
            <StatusSlot $w={66}><Wifi /></StatusSlot>
            <StatusSlot $w={64} $size={22.500}>%16</StatusSlot>
            <StatusSlot $w={49}><Battery /></StatusSlot>
            <StatusSlot $w={195}>Tue 14:44</StatusSlot>
            <StatusSlot $w={44}><SearchIcon s={30} w={2.600} /></StatusSlot>
            <StatusSlot $w={84}><Siri /></StatusSlot>
            <StatusSlot $w={36}><ListIcon /></StatusSlot>
          </MenuGroup>
        </MenuBar>

        <Browser>
          <Sidebar>
            <Lights><Light $c="#ff564f" /><Light $c="#e6b93c" /><Light $c="#58c03b" /></Lights>
            <SideSlot><ActiveTile><BowlIcon /></ActiveTile></SideSlot>
            <SideSlot><GamepadIcon /></SideSlot>
            <SideDash />
            <SideSlot>
              <svg width="42" height="42" viewBox="0 0 42 42"><defs><linearGradient id="msg" x1=".2" y1="1" x2=".8" y2="0"><stop offset="0" stopColor="#0a84f5" /><stop offset=".5" stopColor="#9a3cf0" /><stop offset="1" stopColor="#ff5f66" /></linearGradient></defs><path d="M21 1 C9.500 1 1 9.200 1 20 C1 26 3.500 31 8 34.500 V40.500 L14 37.500 C16 38.200 18.500 38.600 21 38.600 C32.500 38.600 41 30.500 41 20 C41 9.200 32.500 1 21 1 Z" fill="url(#msg)" /><path d="M9 26 L17.500 14.500 Q19 13 21 14.500 L25 18 L33 13.500 L25 25 Q23 26.500 21.500 25 L17 21.500 Z" fill="#f1eefa" /></svg>
            </SideSlot>
            <SideSlot>
              <svg width="40" height="40" viewBox="0 0 40 40"><path d="M2 38.500 L4.700 28.500 A17.500 17.500 0 1 1 11.500 35.700 Z" fill="#3cb14d" stroke="#ebebeb" strokeWidth="2.800" /><path d="M13 11 Q15 9.500 16.500 12 L17.800 15 L16 18 Q18.500 23 23.500 25 L26 22.500 L30 24.500 Q30.500 29 26 29.500 Q21 30 15.500 24 Q9.500 17.500 13 11 Z" fill="#ebebeb" /></svg>
              <RedDot />
            </SideSlot>
            <SideSlot>
              <Round $s={40} $r="9px" $fs={34} $fg="#f3ece8" $bg="radial-gradient(circle at 25% 105%, #fdd66b 0%, #f5703f 32%, #d0308d 58%, #6150c5 100%)"><FaInstagram /></Round>
            </SideSlot>
            <SideSlot><Round $s={40} $bg="#0b95dc" $fs={23} $fg="#ececec"><FaTwitter /></Round></SideSlot>
            <SideDash />
            <SideSlot><SendIcon /></SideSlot>
            <SideDash />
            <SideSlot><HeartIcon /></SideSlot>
            <SideSlot><ClockIcon /></SideSlot>
            <SideSlot><CubeIcon /></SideSlot>
            <SideSlot><GearIcon /></SideSlot>
            <SideDash />
            <SideSlot><BulbIcon /><RedDot /></SideSlot>
            <SideSlot><TranslateIcon /></SideSlot>
            <SideSlot $mt={42}><DotsIcon /></SideSlot>
          </Sidebar>

          <BrowserMain>
            <TabStrip>
              <Tab $w={394} $pl={13} $gap={6} $ls={-0.15}><FaGithub size={33} color="#fff" /><span>Gozdinhos (Gözde Tekalmaz)</span></Tab>
              <TabDivider />
              <Tab $w={400} $pl={14} $gap={8}><FaTwitter size={29} color="#08a0e9" /><span>Home / Twitter</span></Tab>
              <Tab $w={388} $pl={14} $gap={9} $active $ls={-0.35}><FileSolid /><span>Type Ahead</span><EyesEmoji /></Tab>
              <Tab $w={398} $pl={21} $gap={9}><SpeedDialIcon /><span>Speed Dial</span></Tab>
              <TabDivider />
              <TabTool $pl={15}><Line s={26} vb={26}><path d="M13 1 V25 M1 13 H25" /></Line></TabTool>
              <TabTool $end><SearchIcon s={30} w={2.300} /></TabTool>
            </TabStrip>

            <Toolbar>
              <ToolSlot $w={64} $dim><Line w={1.800}><path d="M23 3 L9 16 L23 29" /></Line></ToolSlot>
              <ToolSlot $w={64} $dim><Line w={1.800}><path d="M9 3 L23 16 L9 29" /></Line></ToolSlot>
              <ToolSlot $w={64}><Line w={2.300}><path d="M26.500 9 A12 12 0 1 0 28 19" /><path d="M28.500 3.500 V10 H22 Z" fill="currentColor" strokeWidth="1" /></Line></ToolSlot>
              <ToolSlot $w={64}><Line s={28} vb={28}><rect x="1.500" y="2.500" width="10" height="9.500" rx="2" /><rect x="16.500" y="2.500" width="10" height="9.500" rx="2" /><rect x="1.500" y="16.500" width="10" height="9.500" rx="2" /><rect x="16.500" y="16.500" width="10" height="9.500" rx="2" /></Line></ToolSlot>
              <ToolDivider $ml={8} $mr={36} />
              <VpnBadge>VPN</VpnBadge>
              <PageIconSlot><Line s={28} vb={28}><path d="M3.500 3 Q3.500 1.500 5 1.500 H14.500 L24.500 11.500 V25 Q24.500 26.500 23 26.500 H5 Q3.500 26.500 3.500 25 Z M14.500 1.500 V11.500 H24.500" /></Line></PageIconSlot>
              <Url>file:///Users/gozdetekalmaz/Desktop/JS30-Projects/06%20-%20Type%20Ahead/index.html</Url>
              <ToolSlot $w={52}><Line s={28} vb={28}><path d="M8 5 L9.500 1.500 H18.500 L20 5 H24 Q26.500 5 26.500 7.500 V21 Q26.500 23.500 24 23.500 H4 Q1.500 23.500 1.500 21 V7.500 Q1.500 5 4 5 Z" /><circle cx="14" cy="13.500" r="5" /></Line></ToolSlot>
              <ToolSlot $w={52}><Line s={26}><path d="M1.500 1.500 L31 16 L1.500 30.500 L7 16 Z" strokeWidth="2.300" /></Line></ToolSlot>
              <ToolSlot $w={52}><Line s={28}><path d="M16 29 L3.500 17 C-1 12 1.500 3 9 3 C13 3 16 6 16 8.500 C16 6 19 3 23 3 C30.500 3 33 12 28.500 17 Z" strokeWidth="2.300" /></Line></ToolSlot>
              <ToolDivider $ml={6} $mr={7} />
              <ToolSlot $w={62}><Round $s={32} $r="2px" $bg="#2a343c" $fs={29}><FaReact /></Round></ToolSlot>
              <ToolSlot $w={62}><AdblockIcon /></ToolSlot>
              <ToolSlot $w={62}><TranslateIcon /></ToolSlot>
              <ToolSlot $w={62}><ScreenshotIcon /></ToolSlot>
              <ToolSlot $w={62}><ColorPicker /></ToolSlot>
              <ToolSlot $w={62}><CubeIcon s={28} /></ToolSlot>
              <ToolSlot $w={64}><Line s={28} vb={28}><path d="M14 3 V20 M9 15.500 L14 20.500 L19 15.500 M1.500 21 V23 Q1.500 25.500 4 25.500 H24 Q26.500 25.500 26.500 23 V21" /></Line></ToolSlot>
              <ToolSlot $w={60}><Line s={28} vb={28}><circle cx="14" cy="8" r="5.800" /><path d="M10 15 Q1.500 16 1.500 22 Q1.500 27 6 27 H22 Q26.500 27 26.500 22 Q26.500 16 18 15" /></Line><AlertBadge><Line s={12} vb={12} w={2.200}><path d="M2 2 L10 10 M10 2 L2 10" stroke="#fff" /></Line></AlertBadge></ToolSlot>
              <ToolSlot $w={62}><Line s={26} vb={26}><path d="M1 5 H25 M1 13 H25 M1 21 H25 M18 2.500 V7.500 M8 10.500 V15.500 M15 18.500 V23.500" /></Line></ToolSlot>
            </Toolbar>

            <Bookmarks>
              {BOOKMARKS.map((b) => (
                <Bookmark key={b.label} $w={b.w} $ls={b.ls}><BookmarkIcon>{b.icon}</BookmarkIcon><span>{b.label}</span></Bookmark>
              ))}
            </Bookmarks>

            <Viewport>
              <Page>
                <SearchBox>new</SearchBox>
                <Suggestions>
                  {CITIES.map((c) => (
                    <Suggestion key={c.name}><City $track={c.track}>{highlight(c.name)}</City><Population>{c.population}</Population></Suggestion>
                  ))}
                </Suggestions>
              </Page>
              <ScrollTrack><ScrollThumb /></ScrollTrack>
            </Viewport>
          </BrowserMain>
        </Browser>
        <BrowserGlow />

        <Dock>
          {DOCK_APPS.map(([art, on, count], i) => (
            <DockSlot key={i}>{art}{count && <CountBadge>{count}</CountBadge>}<RunningDot $on={on} /></DockSlot>
          ))}
          <DockDivider />
          {DOCK_RECENT.map((art, i) => <DockSlot key={i}>{art}<RunningDot $on /></DockSlot>)}
          <DockDivider />
          <DockSlot><Folder /></DockSlot>
          <DockSlot><Shot $bg="#e9e9e9" $h={41}><ShotBar /><svg width="62" height="36"><rect x="21" y="16" width="19" height="15" fill="#203a44" /></svg></Shot><ShotBadge><Preview s={24} /></ShotBadge></DockSlot>
          <DockSlot><Shot><ShotBar /><svg width="62" height="36"><path d="M0 0 H16 V36 H0 Z" fill="#f1f1ef" /><rect x="18" y="1" width="42" height="10" fill="#aed2fb" /></svg></Shot><ShotBadge><Notes s={24} /></ShotBadge></DockSlot>
          <DockSlot><Shot $h={42} $mt={10} $frame="3px solid #0c0c0c"><CodeLines n={9} c="#777" /></Shot></DockSlot>
          <DockSlot><Shot $h={39}><ShotBar $c="#2b2b2b" /><svg width="62" height="36"><rect x="17" y="5" width="34" height="1.500" fill="#ddd" /><rect x="51" y="4" width="6" height="3" fill="#2d7ff0" /><path d="M3 10 H13 M3 14 H12 M18 11 H40 M18 26 H26" stroke="#d6b5a8" /></svg></Shot><ShotBadge><Postman s={23} /></ShotBadge></DockSlot>
          <DockSlot><Shot $h={36} $mt={13}><ShotBar /><CodeLines n={6} c="#b5b5b5" /></Shot><ShotBadge><Safari s={23} /></ShotBadge></DockSlot>
          <DockSlot><Shot $h={40} $bg="#20242b"><ShotBar $c="#30343d" /><svg width="62" height="36"><path d="M0 0 H10 V36 H0 Z M42 0 H62 V36 H42 Z" fill="#2c3039" /><path d="M2 4 H8 M2 12 H8 M2 20 H7" stroke="#4c6a5a" /><path d="M46 7 H50" stroke="#d4703a" strokeWidth="2" /></svg></Shot><ShotBadge><Kraken s={23} fs={17} /></ShotBadge></DockSlot>
          <DockSlot><Shot $h={42} $mt={10}><ShotBar $c="#3b123d" /><svg width="62" height="40"><path d="M0 0 H17 V40 H0 Z" fill="#3f1541" /><rect x="4" y="26" width="13" height="2" fill="#1a6aa6" /><path d="M20 4 H26 M20 9 H42 M20 14 H38 M20 24 H48 M20 30 H34" stroke="#aaa" /></svg></Shot><ShotBadge><Slack s={23} /></ShotBadge></DockSlot>
          <DockSlot><Shot $h={36} $mt={13} $bg="#fdfdfd"><ShotBar $c="#e9e9e9" /><svg width="62" height="32"><path d="M0 0 H12 V32 H0 Z" fill="#ececec" /><path d="M15 3 h5 v6 h-5 Z M24 3 h5 v6 h-5 Z M33 3 h5 v6 h-5 Z M42 3 h5 v6 h-5 Z" fill="none" stroke="#aaa" /></svg></Shot><ShotBadge><Finder s={23} /></ShotBadge></DockSlot>
          <DockSlot><Trash /></DockSlot>
        </Dock>
      </Desktop>
    </>
  );
}
